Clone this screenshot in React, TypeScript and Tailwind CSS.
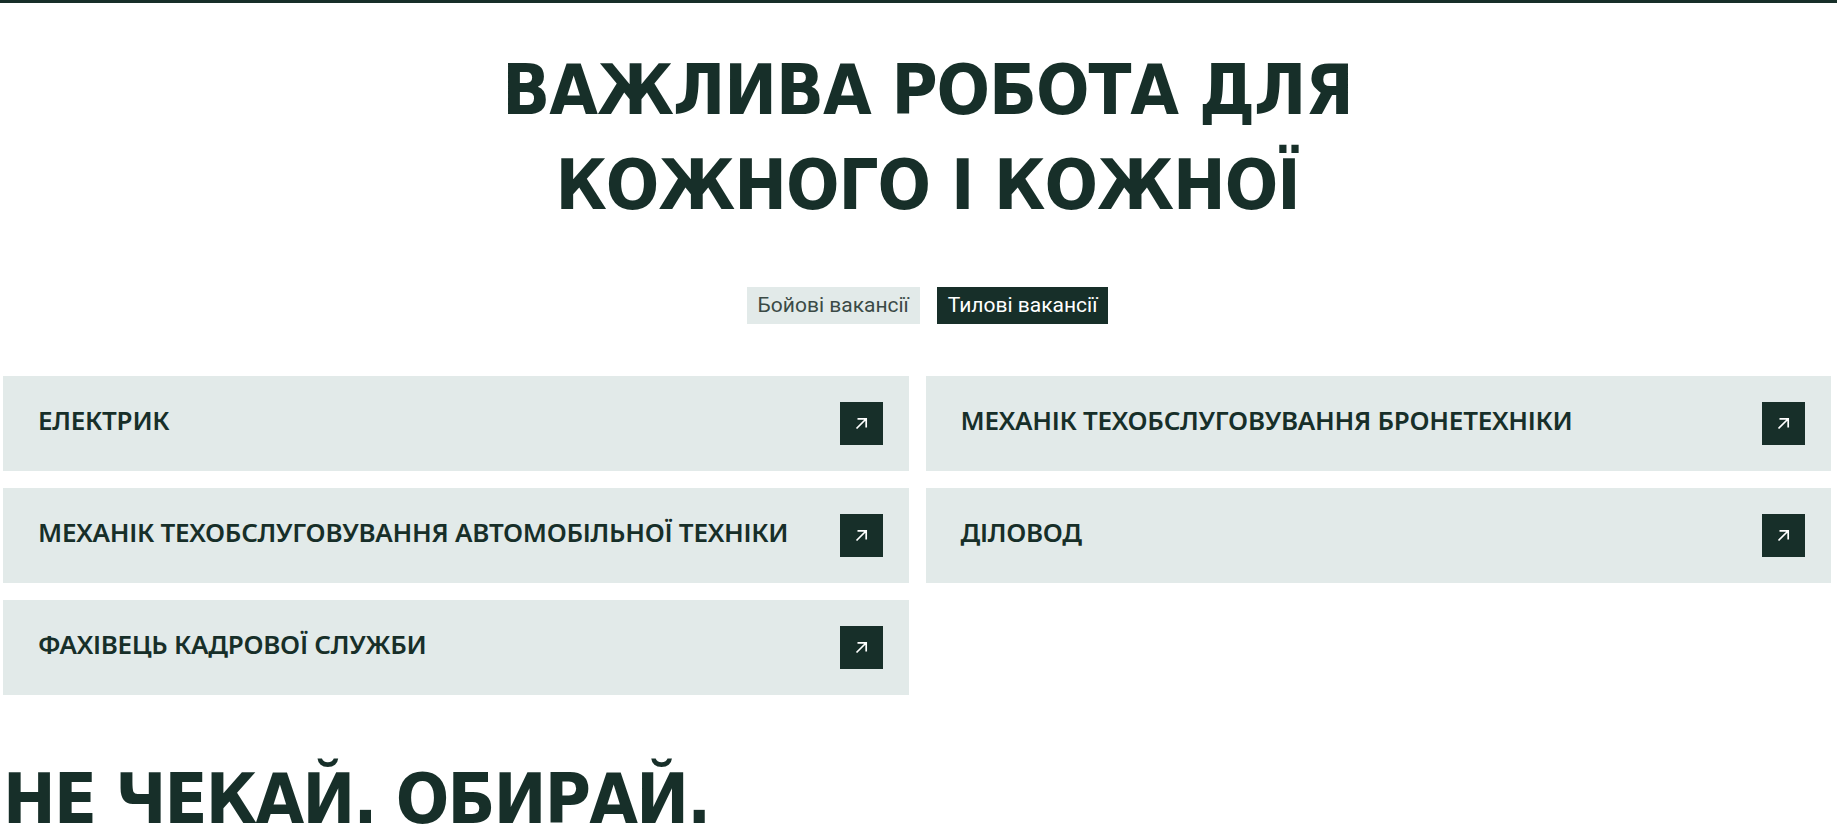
const vacancies = [
  'Електрик',
  'Механік техобслуговування бронетехніки',
  'Механік техобслуговування автомобільної техніки',
  'Діловод',
  'Фахівець кадрової служби',
];

function ArrowIcon() {
  return (
    <svg width="13" height="13" viewBox="0 0 13 13" fill="none" className="text-white">
      <path d="M1.5 11.5 L11 2 M2.5 1.8 H11.2 V10.5" stroke="currentColor" strokeWidth="1.7" />
    </svg>
  );
}

export default function App() {
  const tabs = [
    { label: 'Бойові вакансії', active: false },
    { label: 'Тилові вакансії', active: true },
  ];

  return (
    <div className="min-h-screen bg-white border-t-[3px] border-[#172f29] text-[#172f29] overflow-hidden">
      <section className="pl-[18px] pt-[40px] flex flex-col items-center">
        <h1 className="text-center uppercase font-bold text-[70px] leading-[95px] tracking-[-0.015em] font-['DejaVu_Sans_Condensed','DejaVu_Sans',sans-serif]">
          Важлива робота для
          <br />
          кожного і кожної
        </h1>

        <div className="mt-[54px] flex gap-[17px] font-['Roboto',sans-serif] text-[21px]">
          {tabs.map((tab) => (
            <button
              key={tab.label}
              className={`h-[37px] px-[11px] flex items-center ${
                tab.active ? 'bg-[#172f29] text-white' : 'bg-[#e2eae9] text-[#3b4a46]'
              }`}
            >
              {tab.label}
            </button>
          ))}
        </div>
      </section>

      <section className="mt-[52px] pl-[3px] pr-[6px] grid grid-cols-2 gap-[17px]">
        {vacancies.map((name) => (
          <a
            key={name}
            href="#"
            className="h-[95px] bg-[#e2eae9] pl-[35px] pr-[26px] flex items-center justify-between"
          >
            <span className="mb-[6px] uppercase font-semibold text-[26px] tracking-[-0.01em] font-['Noto_Sans',sans-serif]">
              {name}
            </span>
            <span className="w-[43px] h-[43px] bg-[#172f29] flex items-center justify-center">
              <ArrowIcon />
            </span>
          </a>
        ))}
      </section>

      <h2 className="mt-[57px] pl-[3px] uppercase font-bold text-[70px] leading-[95px] tracking-[-0.025em] font-['DejaVu_Sans_Condensed','DejaVu_Sans',sans-serif]">
        Не чекай. Обирай.
      </h2>
    </div>
  );
}
